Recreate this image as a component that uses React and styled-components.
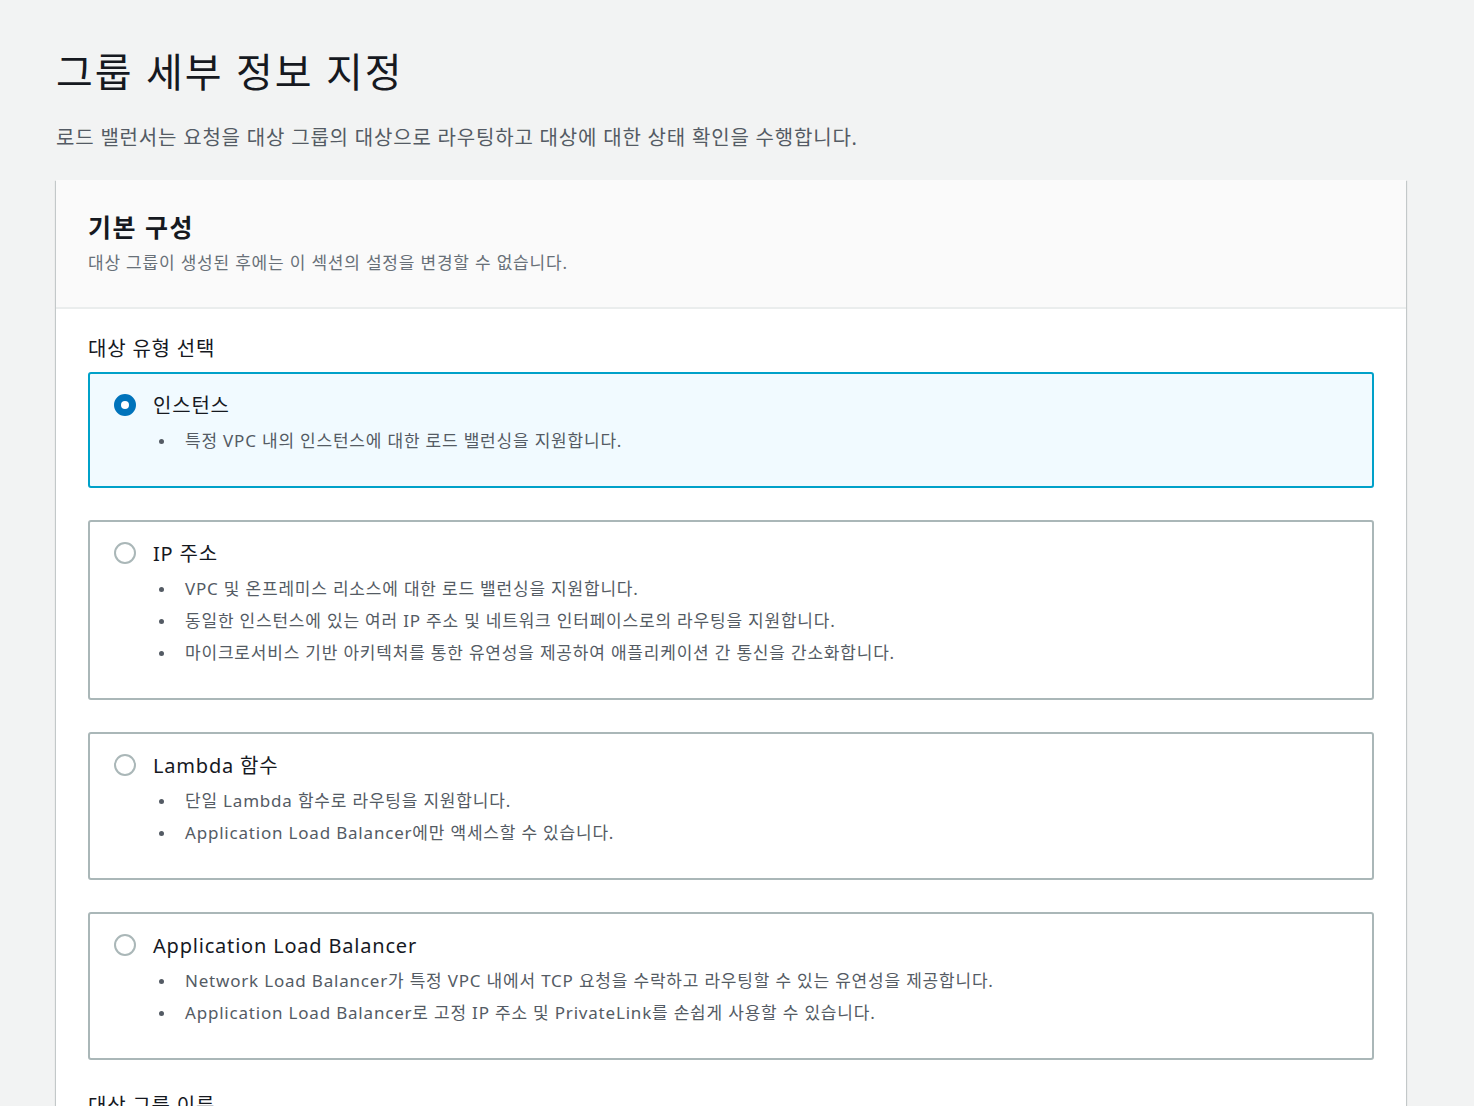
import React from 'react';
import styled, { createGlobalStyle } from 'styled-components';

const GlobalStyle = createGlobalStyle`
  html, body {
    margin: 0;
    padding: 0;
    background: #f2f3f3;
  }
  body {
    font-family: 'Noto Sans', 'Noto Sans CJK KR', sans-serif;
    color: #16191f;
    letter-spacing: 0.05em;
  }
`;

const Page = styled.div`
  padding: 48px 68px 0 56px;
  height: 1106px;
  box-sizing: border-box;
  overflow: hidden;
`;

const Title = styled.h1`
  margin: 0;
  font-size: 40px;
  line-height: 48px;
  font-weight: 400;
  letter-spacing: 0.05em;
  color: #16191f;
`;

const Lead = styled.p`
  margin: 28px 0 28px;
  font-size: 20px;
  line-height: 28px;
  color: #545b64;
`;

const Card = styled.section`
  background: #fff;
  box-shadow: 0 1px 1px 0 rgba(0, 28, 36, 0.3), 1px 1px 1px 0 rgba(0, 28, 36, 0.15),
    -1px 1px 1px 0 rgba(0, 28, 36, 0.15);
`;

const CardHeader = styled.header`
  background: #fafafa;
  padding: 30px 32px 32px;
  border-bottom: 2px solid #eaeded;
  h2 {
    margin: 0;
    font-size: 25px;
    line-height: 34px;
    font-weight: 700;
    letter-spacing: 0.06em;
    color: #16191f;
  }
  p {
    margin: 7px 0 0;
    font-size: 17px;
    line-height: 24px;
    color: #687078;
  }
`;

const CardBody = styled.div`
  padding: 26px 32px 40px;
`;

const FieldLabel = styled.div`
  font-size: 20px;
  line-height: 28px;
  color: #16191f;
  margin-bottom: 9px;
`;

const Tiles = styled.div`
  display: flex;
  flex-direction: column;
  gap: 32px;
  margin-bottom: 32px;
`;

const Tile = styled.label`
  display: flex;
  gap: 17px;
  padding: 17px 24px 29px;
  border: 2px solid ${(p) => (p.$checked ? '#00a1c9' : '#aab7b8')};
  background: ${(p) => (p.$checked ? '#f1faff' : '#fff')};
  border-radius: 3px;
  cursor: pointer;
`;

const Radio = styled.span`
  flex: none;
  box-sizing: border-box;
  width: 22px;
  height: 22px;
  margin-top: 3px;
  border-radius: 50%;
  background: ${(p) => (p.$checked ? '#0073bb' : '#fff')};
  border: 2px solid ${(p) => (p.$checked ? '#0073bb' : '#aab7b8')};
  display: flex;
  align-items: center;
  justify-content: center;
  &::after {
    content: '';
    display: ${(p) => (p.$checked ? 'block' : 'none')};
    width: 8px;
    height: 8px;
    border-radius: 50%;
    background: #fff;
  }
`;

const TileContent = styled.div`
  flex: 1;
`;

const TileTitle = styled.div`
  font-size: 20px;
  line-height: 30px;
  color: #16191f;
`;

const Bullets = styled.ul`
  list-style: none;
  margin: 4px 0 0;
  padding: 0;
  li {
    position: relative;
    padding-left: 32px;
    font-size: 17px;
    line-height: 32px;
    color: #545b64;
  }
  li::before {
    content: '';
    position: absolute;
    left: 6px;
    top: 14px;
    width: 5px;
    height: 5px;
    border-radius: 50%;
    background: #545b64;
  }
`;

const options = [
  {
    title: '인스턴스',
    checked: true,
    items: ['특정 VPC 내의 인스턴스에 대한 로드 밸런싱을 지원합니다.'],
  },
  {
    title: 'IP 주소',
    items: [
      'VPC 및 온프레미스 리소스에 대한 로드 밸런싱을 지원합니다.',
      '동일한 인스턴스에 있는 여러 IP 주소 및 네트워크 인터페이스로의 라우팅을 지원합니다.',
      '마이크로서비스 기반 아키텍처를 통한 유연성을 제공하여 애플리케이션 간 통신을 간소화합니다.',
    ],
  },
  {
    title: 'Lambda 함수',
    items: ['단일 Lambda 함수로 라우팅을 지원합니다.', 'Application Load Balancer에만 액세스할 수 있습니다.'],
  },
  {
    title: 'Application Load Balancer',
    items: [
      'Network Load Balancer가 특정 VPC 내에서 TCP 요청을 수락하고 라우팅할 수 있는 유연성을 제공합니다.',
      'Application Load Balancer로 고정 IP 주소 및 PrivateLink를 손쉽게 사용할 수 있습니다.',
    ],
  },
];

export default function App() {
  return (
    <>
      <GlobalStyle />
      <Page>
        <Title>그룹 세부 정보 지정</Title>
        <Lead>로드 밸런서는 요청을 대상 그룹의 대상으로 라우팅하고 대상에 대한 상태 확인을 수행합니다.</Lead>
        <Card>
          <CardHeader>
            <h2>기본 구성</h2>
            <p>대상 그룹이 생성된 후에는 이 섹션의 설정을 변경할 수 없습니다.</p>
          </CardHeader>
          <CardBody>
            <FieldLabel>대상 유형 선택</FieldLabel>
            <Tiles>
              {options.map((o) => (
                <Tile key={o.title} $checked={o.checked}>
                  <Radio $checked={o.checked} />
                  <TileContent>
                    <TileTitle>{o.title}</TileTitle>
                    <Bullets>
                      {o.items.map((t) => (
                        <li key={t}>{t}</li>
                      ))}
                    </Bullets>
                  </TileContent>
                </Tile>
              ))}
            </Tiles>
            <FieldLabel>대상 그룹 이름</FieldLabel>
          </CardBody>
        </Card>
      </Page>
    </>
  );
}
